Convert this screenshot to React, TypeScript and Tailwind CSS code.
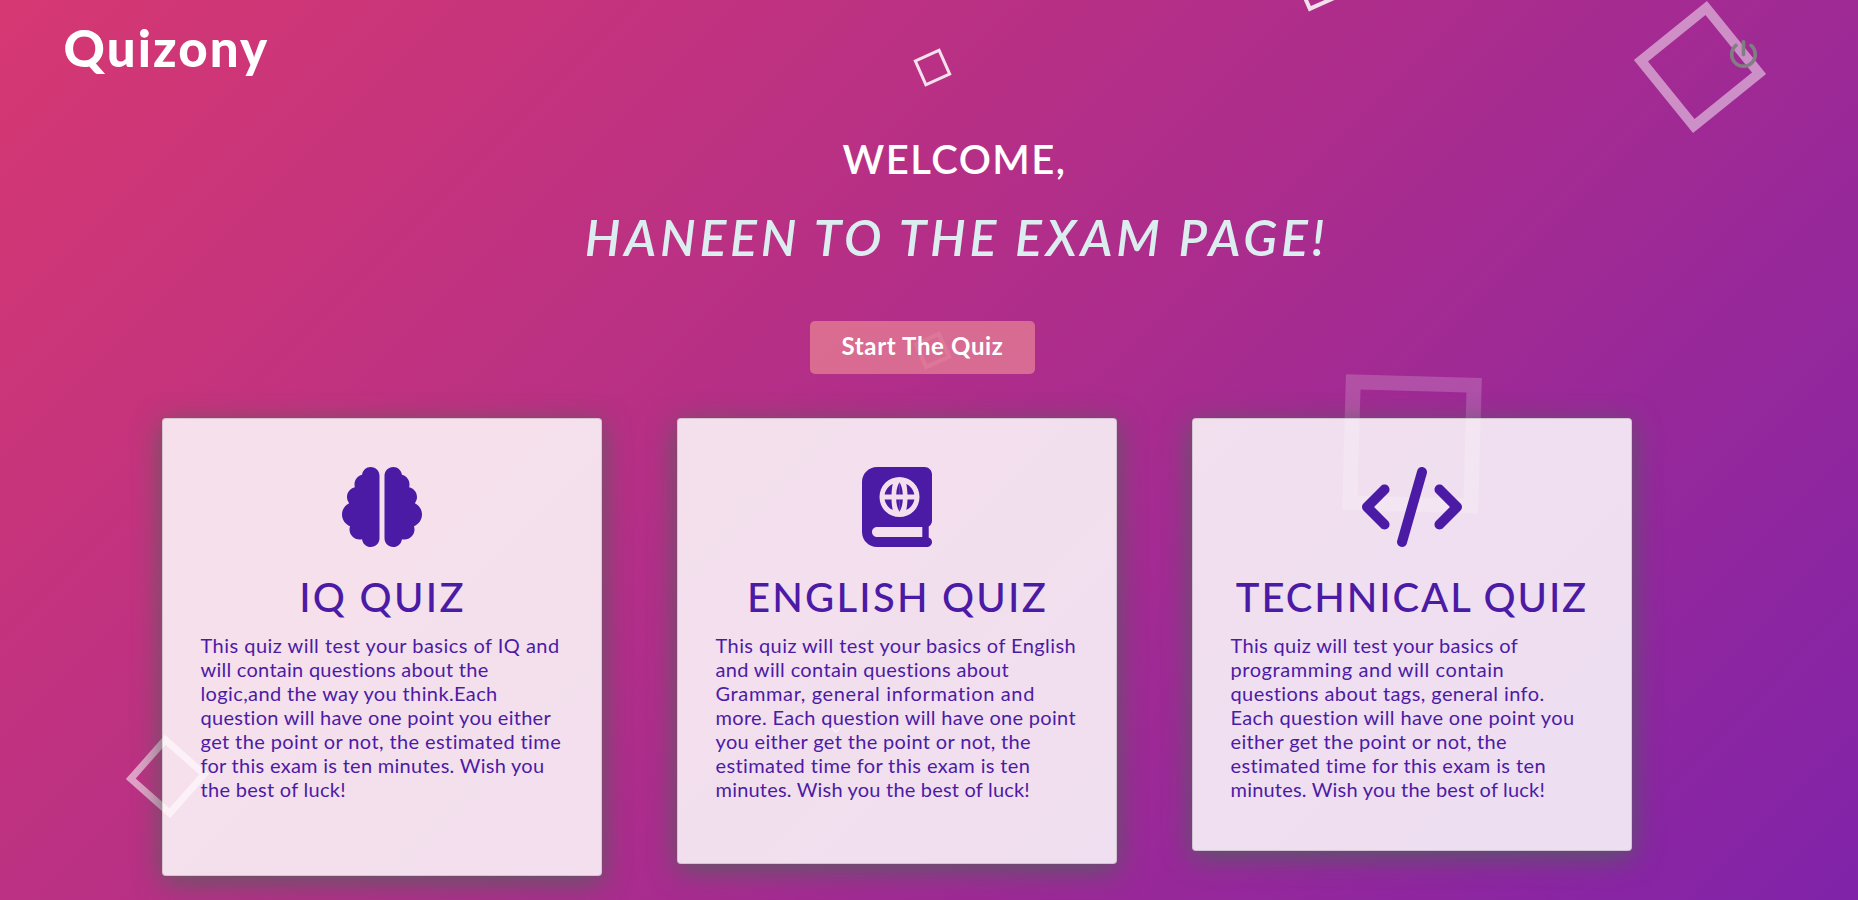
import type { ReactNode } from "react";
import { FaBrain, FaCode, FaPowerOff } from "react-icons/fa6";

type Line = { text: string; tracking: string };

type Quiz = {
  title: string;
  titleClass: string;
  heightClass: string;
  icon: ReactNode;
  lines: Line[];
};

const globeFlips = ["", "translate(480 0) scale(-1 1)", "translate(0 384) scale(1 -1)", "translate(480 384) scale(-1 -1)"];

function AtlasIcon() {
  return (
    <svg viewBox="0 0 448 512" className="h-20 w-[70px]" fill="currentColor" aria-hidden="true">
      <path
        fillRule="evenodd"
        d="M96 0C43 0 0 43 0 96V416c0 53 43 96 96 96H416c17.700 0 32-14.300 32-32 0-13-8-24-21-29V381c13-8 21-21 21-37V48c0-26.500-21.500-48-48-48H96zM96 384H386v64H96c-17.700 0-32-14.300-32-32s14.300-32 32-32zM240 64a128 128 0 1 0 0 256a128 128 0 1 0 0-256z"
      />
      {globeFlips.map((flip) => (
        <path
          key={flip}
          transform={flip || undefined}
          d="M145 176C150 147 170 121 197 109C192 128 190 152 189 176ZM240.500 98C228 115 220 145 219 176H240.500Z"
        />
      ))}
    </svg>
  );
}

const quizzes: Quiz[] = [
  {
    title: "IQ QUIZ",
    titleClass: "pl-[1px] tracking-[2.3px]",
    heightClass: "h-[458px]",
    icon: <FaBrain size={80} />,
    lines: [
      { text: "This quiz will test your basics of IQ and", tracking: "tracking-[0.47px]" },
      { text: "will contain questions about the", tracking: "tracking-[0.261px]" },
      { text: "logic,and the way you think.Each", tracking: "tracking-[0.381px]" },
      { text: "question will have one point you either", tracking: "tracking-[0.27px]" },
      { text: "get the point or not, the estimated time", tracking: "tracking-[0.4px]" },
      { text: "for this exam is ten minutes. Wish you", tracking: "tracking-[0.28px]" },
      { text: "the best of luck!", tracking: "tracking-[0.29px]" },
    ],
  },
  {
    title: "ENGLISH QUIZ",
    titleClass: "pl-[1px] tracking-[2.22px]",
    heightClass: "h-[446px]",
    icon: <AtlasIcon />,
    lines: [
      { text: "This quiz will test your basics of English", tracking: "tracking-[0.42px]" },
      { text: "and will contain questions about", tracking: "tracking-[0.34px]" },
      { text: "Grammar, general information and", tracking: "tracking-[0.635px]" },
      { text: "more. Each question will have one point", tracking: "tracking-[0.308px]" },
      { text: "you either get the point or not, the", tracking: "tracking-[0.35px]" },
      { text: "estimated time for this exam is ten", tracking: "tracking-[0.372px]" },
      { text: "minutes. Wish you the best of luck!", tracking: "tracking-[0.197px]" },
    ],
  },
  {
    title: "TECHNICAL QUIZ",
    titleClass: "tracking-[1.88px]",
    heightClass: "h-[433px]",
    icon: <FaCode size={80} className="w-[100px]" />,
    lines: [
      { text: "This quiz will test your basics of", tracking: "tracking-[0.34px]" },
      { text: "programming and will contain", tracking: "tracking-[0.56px]" },
      { text: "questions about tags, general info.", tracking: "tracking-[0.416px]" },
      { text: "Each question will have one point you", tracking: "tracking-[0.364px]" },
      { text: "either get the point or not, the", tracking: "tracking-[0.35px]" },
      { text: "estimated time for this exam is ten", tracking: "tracking-[0.39px]" },
      { text: "minutes. Wish you the best of luck!", tracking: "tracking-[0.2px]" },
    ],
  },
];

const squares = [
  "left-[917.5px] top-[52.5px] size-[29px] rotate-[-24deg] border-[3px] border-white/85",
  "left-[1298.5px] top-[-35.5px] size-[40px] rotate-[-24deg] border-[4px] border-white/85",
  "left-[1653px] top-[20px] size-[94px] rotate-[-39deg] border-[10.5px] border-white/48",
  "left-[1343.5px] top-[376px] size-[136px] rotate-[1.6deg] border-[15px] border-white/18",
  "left-[137.5px] top-[746.5px] size-[59px] rotate-[-48.5deg] border-[7px] border-white/55",
  "left-[917.5px] top-[335.5px] size-[29px] rotate-[-24deg] border-[4px] border-white/20",
];

function QuizCard({ quiz }: { quiz: Quiz }) {
  return (
    <article
      className={`flex w-[440px] flex-col items-center rounded-[4px] border border-black/12 bg-white/85 px-[37.5px] pt-12 text-[#4c1ba5] shadow-[0_6px_28px_0_rgba(75,100,88,0.82)] ${quiz.heightClass}`}
    >
      {quiz.icon}
      <h2 className={`mt-[26px] text-[40px] leading-12 font-medium whitespace-nowrap ${quiz.titleClass}`}>
        {quiz.title}
      </h2>
      <p className="mt-3 w-full text-[20px] leading-6 whitespace-nowrap">
        {quiz.lines.map((line) => (
          <span key={line.text} className={`block ${line.tracking}`}>
            {line.text}
          </span>
        ))}
      </p>
    </article>
  );
}

export default function App() {
  return (
    <div className="relative isolate h-[900px] w-full overflow-hidden bg-linear-[135deg] from-[#d63872] via-[#ae2d8b] to-[#8023a9] font-[Lato,sans-serif]">
      <div className="absolute inset-0 -z-10" aria-hidden="true">
        {squares.map((square) => (
          <span key={square} className={`absolute ${square}`} />
        ))}
      </div>

      <header className="flex h-[135px] items-start justify-between pr-[100px] pl-[63.5px]">
        <span className="pt-[17px] text-[51px] leading-[61px] font-black tracking-[2.1px] text-white">Quizony</span>
        <button type="button" aria-label="Log out" className="mt-10 text-[#808080]">
          <FaPowerOff size={29} />
        </button>
      </header>

      <section className="flex flex-col items-center">
        <h1 className="flex flex-col items-center pl-[55px] font-semibold whitespace-nowrap">
          <span className="pr-1 text-[40px] leading-12 tracking-[1.5px] text-white">WELCOME,</span>
          <span className="mt-6 text-[50px] leading-[60px] tracking-[3.74px] text-[#dcedf0] italic">
            HANEEN TO THE EXAM PAGE!
          </span>
        </h1>
        <button
          type="button"
          className="mt-[54px] mr-[13px] h-[53px] w-[225px] rounded-[5px] bg-[#e78395]/72 pb-[3px] text-[24px] leading-7 font-bold tracking-[0.65px] text-white"
        >
          Start The Quiz
        </button>
      </section>

      <main className="mt-11 flex items-start gap-[75px] pl-[162px]">
        {quizzes.map((quiz) => (
          <QuizCard key={quiz.title} quiz={quiz} />
        ))}
      </main>

      <span className="absolute top-[723px] left-[831.5px] size-2 rotate-45 border border-t-transparent border-l-transparent border-white/80" />
    </div>
  );
}
